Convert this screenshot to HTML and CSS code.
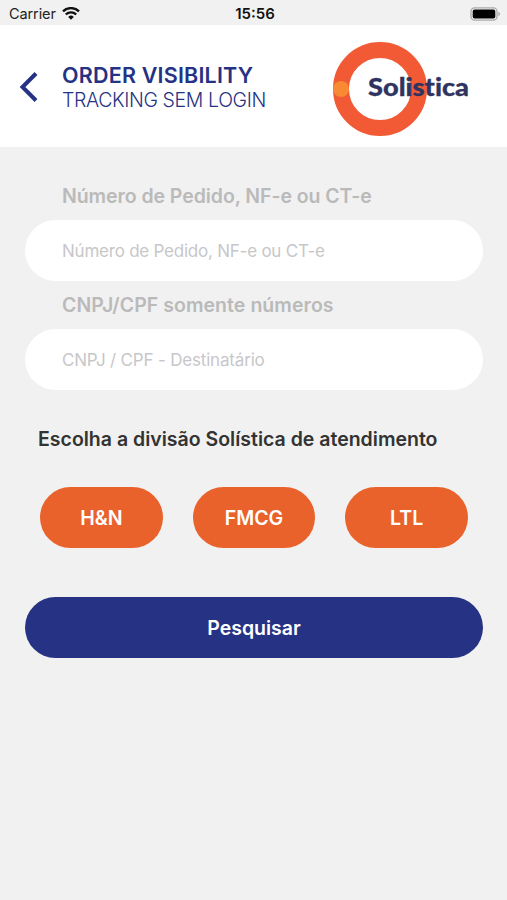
FILE: index.html
```html
<!DOCTYPE html>
<html lang="pt-BR">
<head>
  <meta charset="UTF-8" />
  <meta name="viewport" content="width=device-width, initial-scale=1.0"/>
  <title>Order Visibility</title>
  <link rel="stylesheet" href="styles.css">
</head>
<body>
  <div class="status-bar">
    <div class="carrier">
      <span>Carrier</span>
      <svg class="wifi" width="18" height="13" viewBox="0 0 18 13">
        <path d="M1 4.4a11.4 11.4 0 0 1 16 0M3.8 7.5a7.4 7.4 0 0 1 10.4 0" fill="none" stroke="#111" stroke-width="2.4"/>
        <path d="M6.2 9.9a4 4 0 0 1 5.6 0L9 12.8z" fill="#111"/>
      </svg>
    </div>
    <span class="time">15:56</span>
    <svg class="battery" width="31" height="14" viewBox="0 0 31 14">
      <rect x="1" y="0.8" width="26" height="12.4" rx="3.6" fill="#eee" stroke="#aaa" stroke-width="1.3"/>
      <rect x="2.7" y="2.4" width="22.6" height="9.2" rx="2" fill="#000"/>
      <path d="M28.4 4.8q3.4 2.2 0 4.4z" fill="#aaa"/>
    </svg>
  </div>

  <header class="header">
    <button class="back" aria-label="Voltar">
      <svg width="20" height="32" viewBox="0 0 20 32">
        <path d="M17 2.5L3.5 16L17 29.5" fill="none" stroke="#263283" stroke-width="4"/>
      </svg>
    </button>
    <div class="titles">
      <h1>ORDER VISIBILITY</h1>
      <p>TRACKING SEM LOGIN</p>
    </div>
    <svg class="logo" width="140" height="96" viewBox="0 0 140 96">
      <circle cx="48" cy="48" r="39" fill="none" stroke="#f15a35" stroke-width="16"/>
      <circle cx="9" cy="48" r="8" fill="#f78a32"/>
      <text class="logo-text" x="36" y="54.5" textLength="101" lengthAdjust="spacingAndGlyphs">Solistica</text>
    </svg>
  </header>

  <main class="content">
    <label class="field-label" for="pedido">Número de Pedido, NF-e ou CT-e</label>
    <input class="field" id="pedido" type="text" placeholder="Número de Pedido, NF-e ou CT-e">
    <label class="field-label second" for="cnpj">CNPJ/CPF somente números</label>
    <input class="field cnpj" id="cnpj" type="text" placeholder="CNPJ / CPF - Destinatário">

    <h2 class="question">Escolha a divisão Solística de atendimento</h2>

    <div class="divisions">
      <button>H&amp;N</button>
      <button>FMCG</button>
      <button>LTL</button>
    </div>

    <button class="search">Pesquisar</button>
  </main>
</body>
</html>
```

FILE: styles.css
```css
* {
  box-sizing: border-box;
}

body {
  margin: 0;
  background: #f1f1f1;
  font-family: Inter, 'Liberation Sans', sans-serif;
  min-height: 100vh;
}

h1, h2, p {
  margin: 0;
}

button {
  border: none;
  font-family: inherit;
  padding: 0;
}

.status-bar {
  display: grid;
  grid-template-columns: 1fr auto 1fr;
  align-items: center;
  height: 25px;
  padding: 2px 6px 0 9px;
  font-size: 14.5px;
  color: #222;
}

.carrier {
  display: flex;
  align-items: center;
  gap: 6px;
  letter-spacing: -0.1px;
}

.time {
  font-size: 15px;
  font-weight: 600;
  color: #111;
}

.battery {
  justify-self: end;
}

.header {
  display: flex;
  align-items: center;
  height: 122px;
  padding: 2px 35px 0 19px;
  background: #fff;
  color: #263283;
}

.back {
  width: 20px;
  height: 32px;
  background: none;
}

.titles {
  flex: 1;
  margin: 1px 0 0 23px;
  line-height: 25px;
  white-space: nowrap;
}

.titles h1 {
  font-size: 21.5px;
  font-weight: 600;
  letter-spacing: 0.2px;
}

.titles p {
  font-size: 19.5px;
  font-weight: 300;
  letter-spacing: -0.38px;
}

.logo {
  flex: none;
  margin-top: 3px;
}

.logo-text {
  font-family: Lato, sans-serif;
  font-size: 25.5px;
  font-weight: 900;
  font-variant-ligatures: none;
  fill: #2f335f;
  stroke: #2f335f;
  stroke-width: 0.3px;
}

.content {
  display: flex;
  flex-direction: column;
  padding: 37px 24px 0 25px;
}

.field-label {
  height: 24px;
  margin: 0 0 12px 37px;
  line-height: 24px;
  font-size: 19.5px;
  font-weight: 600;
  letter-spacing: -0.07px;
  color: #bababa;
}

.field-label.second {
  margin-top: 12px;
  letter-spacing: 0.05px;
}

.field {
  height: 61px;
  padding: 0 37px;
  border: none;
  border-radius: 31px;
  background: #fff;
  font-family: inherit;
  font-size: 17px;
  letter-spacing: -0.23px;
}

.field.cnpj {
  letter-spacing: -0.18px;
}

.field::placeholder {
  color: #c7c7c9;
}

.question {
  height: 24px;
  margin: 37px 0 36px 13px;
  line-height: 24px;
  font-size: 19.5px;
  font-weight: 600;
  color: #333;
  white-space: nowrap;
}

.divisions {
  display: grid;
  grid-template-columns: repeat(3, 1fr);
  gap: 30px;
  padding: 0 15px;
}

.divisions button {
  height: 61px;
  border-radius: 31px;
  background: #ea622b;
  color: #fff;
  font-size: 19.5px;
  font-weight: 600;
}

.search {
  height: 61px;
  margin-top: 49px;
  border-radius: 31px;
  background: #263283;
  color: #fff;
  font-size: 19.5px;
  font-weight: 600;
}
```
